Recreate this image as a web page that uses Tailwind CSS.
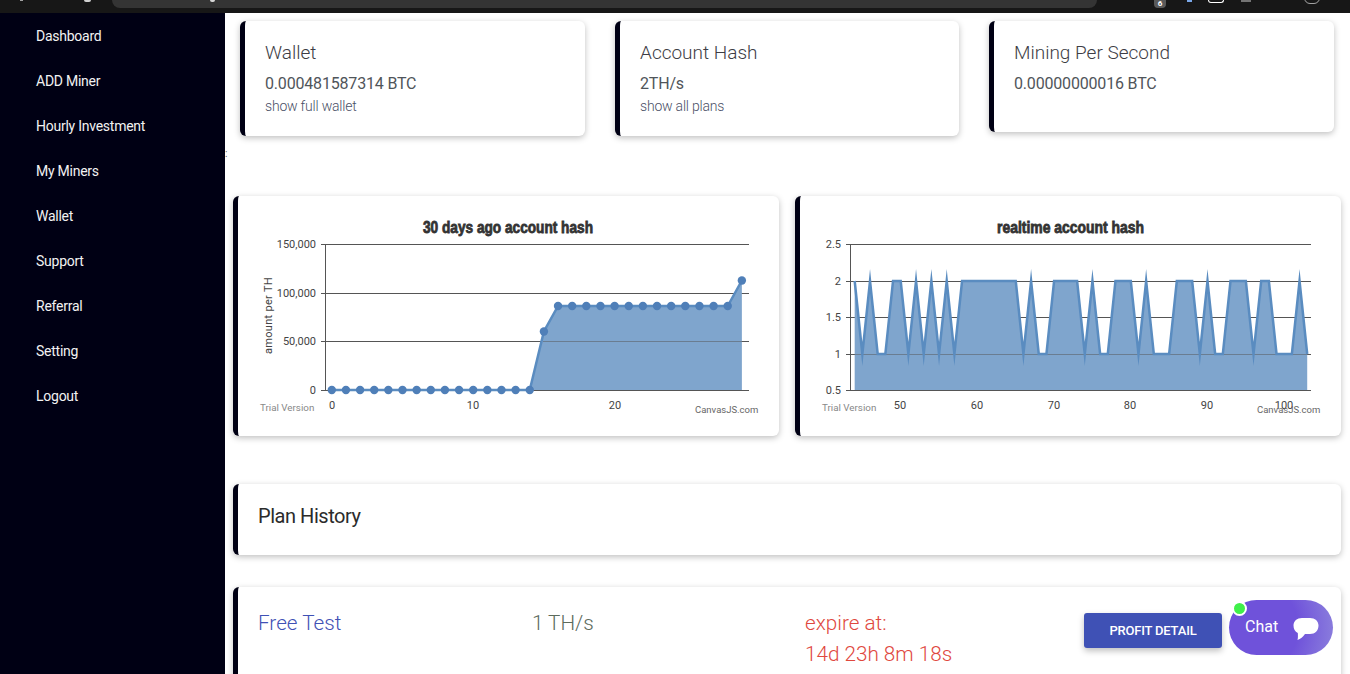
<!DOCTYPE html>
<html lang="en">
<head>
    <meta charset="UTF-8">
    <meta name="viewport" content="width=device-width, initial-scale=1.0">
    <title>Dashboard</title>
    <script src="https://cdn.jsdelivr.net/npm/@tailwindcss/browser@4"></script>
</head>
<body class="bg-white h-screen overflow-hidden flex flex-col font-['Roboto',sans-serif] text-[#333]">

<!-- Browser chrome, cut off at the top of the capture -->
<div class="h-[13px] shrink-0 bg-[#171717] relative">
    <div class="ml-[112px] w-[985px] h-[8px] bg-[#343434] rounded-bl-lg rounded-br-lg"></div>
    <div class="absolute left-[20px] top-0 w-[3px] h-[1px] bg-white/60"></div>
    <div class="absolute left-[84px] top-0 w-[7px] h-[2px] bg-white/80 rounded-b-sm"></div>
    <div class="absolute left-[210px] top-0 w-[5px] h-[2px] bg-white/80 rounded-b-sm"></div>
    <div class="absolute left-[1154px] top-0 w-[12px] h-[8px] bg-[#5a5a5a] rounded-b-sm text-white text-[8px] leading-[8px] text-center font-bold">6</div>
    <div class="absolute left-[1187px] top-0 w-[5px] h-[2px] bg-[#7aa7e8]"></div>
    <div class="absolute left-[1208px] top-0 w-[16px] h-[3px] border-b border-x border-white rounded-b-sm"></div>
    <div class="absolute left-[1241px] top-0 w-[10px] h-[2px] bg-white/40"></div>
    <div class="absolute left-[1304px] top-[-8px] w-[16px] h-[12px] border border-white/60 rounded-full"></div>
</div>

<div class="flex flex-1 min-h-0">
    <!-- Sidebar -->
    <nav class="w-[225px] shrink-0 bg-[#000014] pl-[36px] pt-[1px] text-[14px] tracking-[-0.25px] text-[#f2f2f2] flex flex-col">
        <a href="#" class="h-[45px] leading-[45px]">Dashboard</a>
        <a href="#" class="h-[45px] leading-[45px]">ADD Miner</a>
        <a href="#" class="h-[45px] leading-[45px]">Hourly Investment</a>
        <a href="#" class="h-[45px] leading-[45px]">My Miners</a>
        <a href="#" class="h-[45px] leading-[45px]">Wallet</a>
        <a href="#" class="h-[45px] leading-[45px]">Support</a>
        <a href="#" class="h-[45px] leading-[45px]">Referral</a>
        <a href="#" class="h-[45px] leading-[45px]">Setting</a>
        <a href="#" class="h-[45px] leading-[45px]">Logout</a>
    </nav>

    <!-- Main -->
    <main class="flex-1 min-w-0 relative pl-[8px] pr-[9px] pt-[8px]">
        <!-- Stat cards -->
        <div class="flex items-start gap-[30px] pl-[7px]">
            <div class="w-[345px] h-[115px] bg-white rounded-md border-l-[5px] border-[#000014] shadow-[0_2px_6px_rgba(0,0,0,0.25)] pl-[20px] pt-[21px]">
                <h3 class="text-[19px] font-light leading-[22px] text-[#3d3d45]">Wallet</h3>
                <p class="mt-[10px] text-[16px] leading-[20px] tracking-[-0.18px] text-[#50555a]">0.000481587314 BTC</p>
                <a href="#" class="block mt-[2px] text-[14px] font-light leading-[20px] tracking-[-0.2px] text-[#4a4f66]">show full wallet</a>
            </div>
            <div class="w-[344px] h-[115px] bg-white rounded-md border-l-[5px] border-[#000014] shadow-[0_2px_6px_rgba(0,0,0,0.25)] pl-[20px] pt-[21px]">
                <h3 class="text-[19px] font-light leading-[22px] text-[#3d3d45]">Account Hash</h3>
                <p class="mt-[10px] text-[16px] leading-[20px] tracking-[-0.18px] text-[#50555a]">2TH/s</p>
                <a href="#" class="block mt-[2px] text-[14px] font-light leading-[20px] tracking-[-0.2px] text-[#4a4f66]">show all plans</a>
            </div>
            <div class="w-[345px] h-[111px] bg-white rounded-md border-l-[5px] border-[#000014] shadow-[0_2px_6px_rgba(0,0,0,0.25)] pl-[20px] pt-[21px]">
                <h3 class="text-[19px] font-light leading-[22px] text-[#3d3d45]">Mining Per Second</h3>
                <p class="mt-[10px] text-[16px] leading-[20px] tracking-[-0.18px] text-[#50555a]">0.00000000016 BTC</p>
            </div>
        </div>

        <!-- Charts -->
        <div class="flex gap-[16px] mt-[60px]">
            <div class="w-[546px] h-[240px] bg-white rounded-md border-l-[5px] border-[#000014] shadow-[0_2px_6px_rgba(0,0,0,0.25)]">
                <svg width="541" height="240" viewBox="238 196 541 240" class="block font-['Roboto',sans-serif]">
                    <text x="423" y="233" textLength="170" lengthAdjust="spacingAndGlyphs" font-size="16" font-weight="700" fill="#333" stroke="#333" stroke-width="0.8" class="font-['Liberation_Sans',sans-serif]">30 days ago account hash</text>
                    <path d="M321 244.500H749M321 293.500H749M321 341.500H749M321 390.500H749M325.500 244V390" stroke="#555" stroke-width="1"/>
                    <path id="fill1" fill="#7fa5cd"/>
                    <path d="M543 341.500H749" stroke="#555" stroke-width="1" stroke-opacity="0.5"/>
                    <polyline id="line1" fill="none" stroke="#5a8cc0" stroke-width="2.500"/>
                    <g id="dots1" fill="#4f7fb8"></g>
                    <g font-size="11" fill="#444" text-anchor="end">
                        <text x="316" y="248">150,000</text>
                        <text x="316" y="297">100,000</text>
                        <text x="316" y="345">50,000</text>
                        <text x="316" y="394">0</text>
                    </g>
                    <g font-size="11" fill="#444" text-anchor="middle">
                        <text x="332" y="409">0</text>
                        <text x="473" y="409">10</text>
                        <text x="615" y="409">20</text>
                    </g>
                    <text transform="translate(272 354) rotate(-90)" font-size="11" fill="#444" letter-spacing="0.3">amount per TH</text>
                    <text x="260" y="411" font-size="9.800" fill="#888">Trial Version</text>
                    <text x="695" y="413" font-size="9.500" fill="#666">CanvasJS.com</text>
                </svg>
            </div>
            <div class="w-[546px] h-[240px] bg-white rounded-md border-l-[5px] border-[#000014] shadow-[0_2px_6px_rgba(0,0,0,0.25)]">
                <svg width="541" height="240" viewBox="800 196 541 240" class="block font-['Roboto',sans-serif]">
                    <text x="997" y="233" textLength="147" lengthAdjust="spacingAndGlyphs" font-size="16" font-weight="700" fill="#333" stroke="#333" stroke-width="0.8" class="font-['Liberation_Sans',sans-serif]">realtime account hash</text>
                    <path d="M846 244.500H1311M846 281.500H1311M846 317.500H1311M846 354.500H1311M846 390.500H1311M850.500 244V390" stroke="#555" stroke-width="1"/>
                    <path id="fill2" fill="#7fa5cd"/>
                    <path d="M854 354.500H1307" stroke="#555" stroke-width="1" stroke-opacity="0.5"/>
                    <polyline id="line2" fill="none" stroke="#5a8cc0" stroke-width="2.500" stroke-linejoin="miter" stroke-miterlimit="10"/>
                    <g font-size="11" fill="#444" text-anchor="end">
                        <text x="841" y="248">2.5</text>
                        <text x="841" y="285">2</text>
                        <text x="841" y="321">1.5</text>
                        <text x="841" y="358">1</text>
                        <text x="841" y="394">0.5</text>
                    </g>
                    <g font-size="11" fill="#444" text-anchor="middle">
                        <text x="900" y="409">50</text>
                        <text x="977" y="409">60</text>
                        <text x="1054" y="409">70</text>
                        <text x="1130" y="409">80</text>
                        <text x="1207" y="409">90</text>
                        <text x="1284" y="409">100</text>
                    </g>
                    <text x="822" y="411" font-size="9.800" fill="#888">Trial Version</text>
                    <text x="1257" y="413" font-size="9.500" fill="#666">CanvasJS.com</text>
                </svg>
            </div>
        </div>

        <!-- Plan history header -->
        <div class="mt-[48px] h-[71px] bg-white rounded-md border-l-[5px] border-[#000014] shadow-[0_2px_6px_rgba(0,0,0,0.25)] pl-[20px] pt-[17px]">
            <h2 class="text-[20px] leading-[30px] text-[#2b2b2b] tracking-[-0.45px]">Plan History</h2>
        </div>

        <!-- Plan row -->
        <div class="mt-[32px] h-[140px] bg-white rounded-md border-l-[5px] border-[#000014] shadow-[0_2px_6px_rgba(0,0,0,0.25)] pl-[20px] pt-[21px] flex items-start text-[20.700px] font-light leading-[31px]">
            <p class="w-[274px] text-[#3f51b5]">Free Test</p>
            <p class="w-[273px] text-[#5c6b5c]">1 TH/s</p>
            <p class="w-[279px] text-[#e0483e]">expire at:<br>14d 23h 8m 18s</p>
            <a href="#" class="mt-[5px] w-[138px] h-[35px] rounded-[3px] bg-[#3f51b5] text-white text-[13px] font-medium leading-[35px] text-center tracking-[-0.2px] shadow-[0_3px_6px_rgba(0,0,0,0.25)]">PROFIT DETAIL</a>
        </div>

        <span class="absolute left-0 top-[135px] text-[10px] leading-[12px] text-[#555]">:</span>
    </main>
</div>

<!-- Chat widget -->
<div class="absolute left-[1229px] top-[600px] w-[104px] h-[55px] rounded-full bg-[radial-gradient(circle_at_20%_50%,#6f52da_55%,#8c80dd_100%)] flex items-center pl-[16px]">
    <span class="text-white text-[16px] leading-none mb-[2px]">Chat</span>
    <svg class="ml-[15px] mt-[2px]" width="26" height="24" viewBox="0 0 26 24"><path d="M9 1H17C22 1 25.500 4 25.500 8.500C25.500 13.500 22 17 17 17H12C10 20 7.500 22 4.500 23C5 21 5 19 4.800 16C2 14.500 0.500 12 0.500 8.500C0.500 4 4 1 9 1Z" fill="#fff"/></svg>
    <span class="absolute left-[3px] top-[1px] w-[15px] h-[15px] rounded-full bg-[#3ff04a] border-2 border-white"></span>
</div>

<script>
    // chart 1 : 30 derniers jours
    const hist = [];
    for (let i = 0; i < 30; i++) {
        let y = 390;
        if (i === 15) y = 331.5;
        if (i > 15) y = 306;
        if (i === 29) y = 280.5;
        hist.push([331.8 + i * 14.14, y]);
    }
    document.getElementById('line1').setAttribute('points', hist.map(p => p.join(',')).join(' '));
    document.getElementById('fill1').setAttribute('d', 'M' + hist.map(p => p.join(' ')).join('L') + 'L741.9 390Z');
    document.getElementById('dots1').innerHTML = hist.map(p => `<circle cx="${p[0]}" cy="${p[1]}" r="4.2"/>`).join('');

    // chart 2 : temps reel, de 44 a 103
    const vals = [2,1,2,1,1,2,2,1,2,1,2,1,2,1,2,2,2,2,2,2,2,2,1,2,1,1,2,2,2,2,1,2,1,1,2,2,2,1,2,1,1,1,2,2,2,1,2,1,1,2,2,2,1,2,2,1,1,1,2,1];
    const live = vals.map((v, i) => [900.7 + (i + 44 - 50) * 7.67, v === 2 ? 281 : 354]);
    document.getElementById('line2').setAttribute('points', live.map(p => p.join(',')).join(' '));
    document.getElementById('fill2').setAttribute('d', 'M' + live.map(p => p.join(' ')).join('L') + 'L' + live[live.length - 1][0] + ' 390L' + live[0][0] + ' 390Z');
</script>
</body>
</html>
